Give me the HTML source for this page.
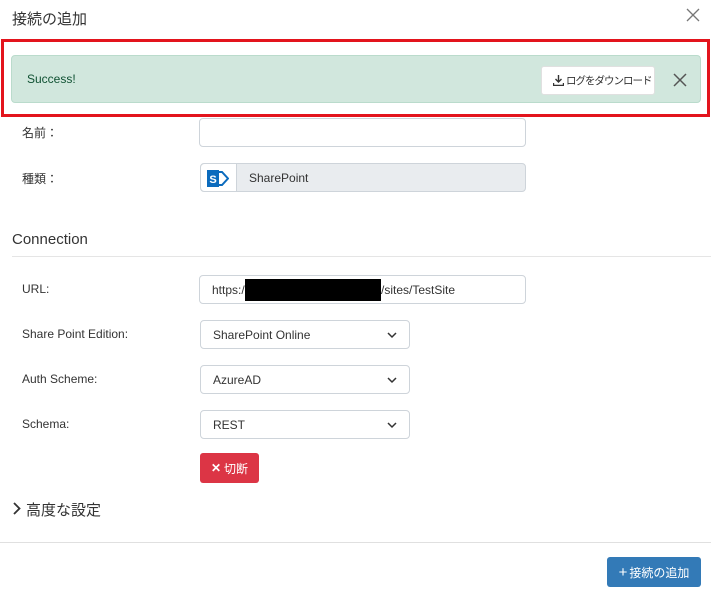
<!DOCTYPE html>
<html><head><meta charset="utf-8"><style>
*{box-sizing:border-box;margin:0;padding:0}
body{width:711px;height:595px;background:#fff;position:relative;overflow:hidden;font-family:"Liberation Sans","Noto Sans CJK JP",sans-serif;color:#212529}
.a{position:absolute}
.lbl{position:absolute;left:22px;font-size:12px;color:#333}
.inp{position:absolute;background:#fff;border:1px solid #ced4da;border-radius:4px;font-size:12px;color:#333;padding-left:12px;display:flex;align-items:center}
.sel svg{position:absolute;right:12px;top:11px}
</style></head><body>
<div class="a" style="left:12px;top:8px;font-size:15px;color:#333">接続の追加</div>
<svg class="a" style="left:686px;top:8px" width="14" height="14"><path d="M1 1L13 13M13 1L1 13" stroke="#777" stroke-width="1.3"/></svg>
<div class="a" style="left:1px;top:39px;width:709px;height:78px;border:3px solid #e3141d"></div>
<div class="a" style="left:11px;top:55px;width:690px;height:48px;background:#d1e7dd;border:1px solid #badbcc;border-radius:4px"></div>
<div class="a" style="left:27px;top:72px;font-size:12px;color:#0f5132">Success!</div>
<div class="a" style="left:541px;top:66px;width:114px;height:29px;background:#fff;border:1px solid #e0e0e0;border-radius:3px;font-size:10.5px;letter-spacing:-1px;white-space:nowrap;color:#333;display:flex;align-items:center;padding-left:11px">
<svg width="11" height="11" style="margin-right:2px;flex:none"><path d="M5.5 0V7M2.5 4L5.5 7L8.5 4M0.5 8V10.5H10.5V8" stroke="#333" stroke-width="1.4" fill="none"/></svg>ログをダウンロード</div>
<svg class="a" style="left:673px;top:73px" width="14" height="14"><path d="M1 1L13 13M13 1L1 13" stroke="#555" stroke-width="1.5"/></svg>
<div class="lbl" style="top:124px">名前：</div>
<div class="inp" style="left:199px;top:118px;width:327px;height:29px"></div>
<div class="lbl" style="top:170px">種類：</div>
<div class="inp" style="left:200px;top:163px;width:326px;height:29px;background:#e9ecef;padding-left:48px">SharePoint</div>
<div class="a" style="left:201px;top:164px;width:36px;height:27px;background:#fff;border-right:1px solid #ced4da;border-radius:4px 0 0 4px"></div>
<svg class="a" style="left:207px;top:169px" width="22" height="19"><path d="M10 3L15 3L21 9.5L15 16L10 16Z" fill="none" stroke="#0b6bbd" stroke-width="2"/><rect x="0" y="1" width="12" height="17" fill="#0b6bbd"/><text x="6" y="14" font-size="11" font-weight="bold" fill="#fff" text-anchor="middle" font-family="Liberation Sans">S</text></svg>
<div class="a" style="left:12px;top:231px;font-size:15px;color:#333">Connection</div>
<div class="a" style="left:12px;top:256px;width:699px;height:1px;background:#e5e5e5"></div>
<div class="lbl" style="top:282px">URL:</div>
<div class="inp" style="left:199px;top:275px;width:327px;height:29px">https:/</div>
<div class="a" style="left:245px;top:279px;width:136px;height:22px;background:#000"></div>
<div class="a" style="left:381px;top:283px;font-size:12px;color:#333">/sites/TestSite</div>
<div class="lbl" style="top:327px">Share Point Edition:</div>
<div class="inp sel" style="left:200px;top:320px;width:210px;height:29px">SharePoint Online<svg width="10" height="7"><path d="M1 1L5 5L9 1" stroke="#333" stroke-width="1.5" fill="none"/></svg></div>
<div class="lbl" style="top:372px">Auth Scheme:</div>
<div class="inp sel" style="left:200px;top:365px;width:210px;height:29px">AzureAD<svg width="10" height="7"><path d="M1 1L5 5L9 1" stroke="#333" stroke-width="1.5" fill="none"/></svg></div>
<div class="lbl" style="top:417px">Schema:</div>
<div class="inp sel" style="left:200px;top:410px;width:210px;height:29px">REST<svg width="10" height="7"><path d="M1 1L5 5L9 1" stroke="#333" stroke-width="1.5" fill="none"/></svg></div>
<div class="a" style="left:200px;top:453px;width:59px;height:30px;background:#dc3545;border-radius:3px;color:#fff;font-size:12px;display:flex;align-items:center;justify-content:center"><b style="margin-right:3px">✕</b>切断</div>
<svg class="a" style="left:13px;top:502px" width="8" height="13"><path d="M1 1L6.5 6.5L1 12" stroke="#333" stroke-width="1.8" fill="none"/></svg>
<div class="a" style="left:26px;top:499px;font-size:15px;color:#333">高度な設定</div>
<div class="a" style="left:0;top:542px;width:711px;height:1px;background:#e0e0e0"></div>
<div class="a" style="left:607px;top:557px;width:94px;height:30px;background:#337ab7;border-radius:3px;color:#fff;font-size:12px;display:flex;align-items:center;justify-content:center"><span style="font-size:15px;margin-right:2px">+</span>接続の追加</div>
</body></html>
